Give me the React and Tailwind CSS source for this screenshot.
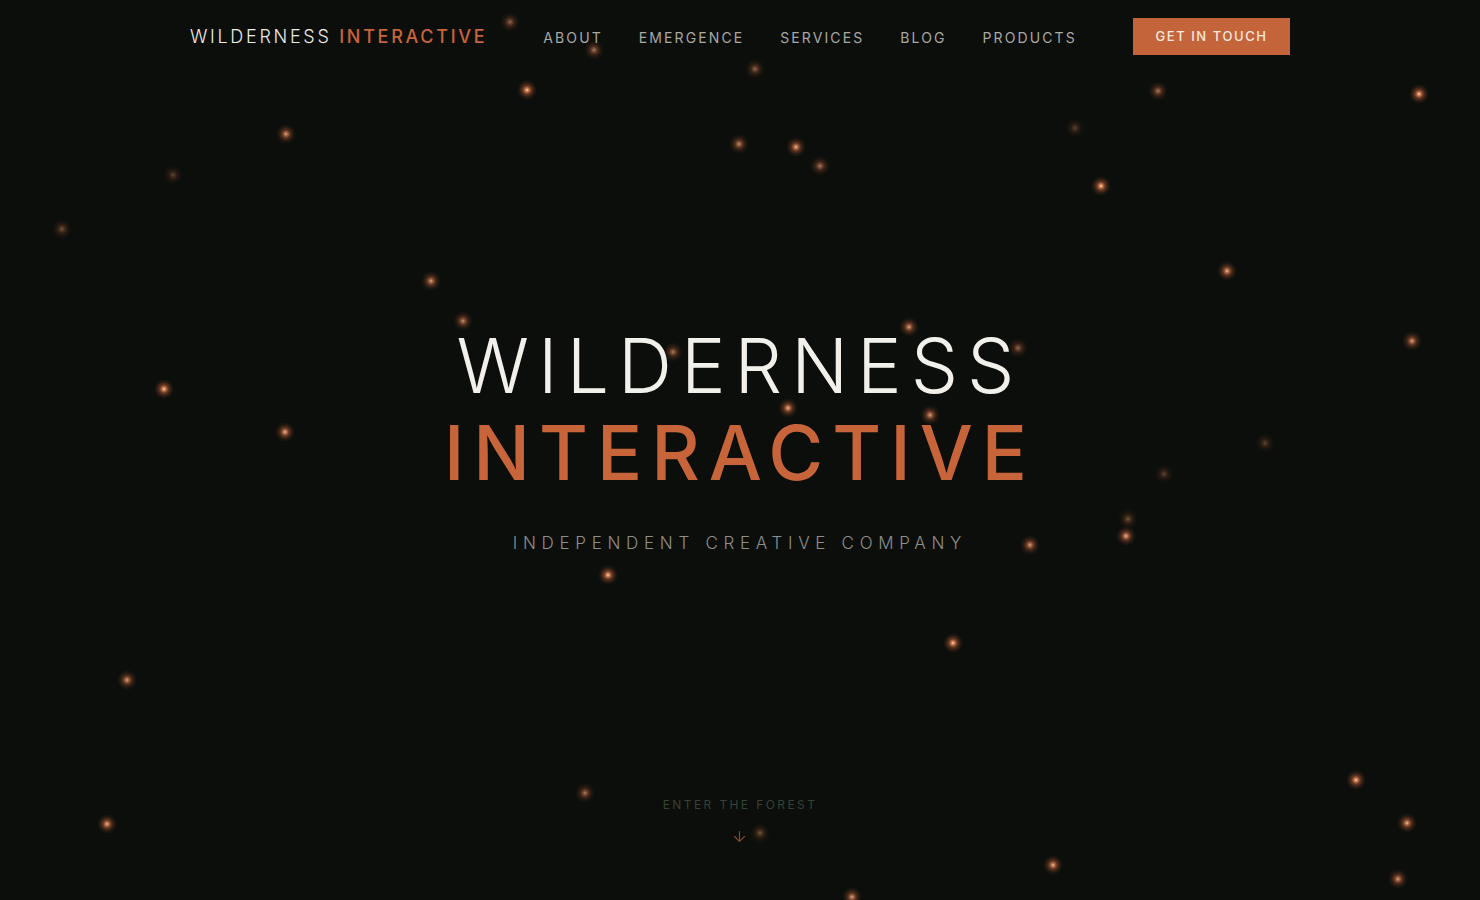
import { ArrowDown } from "lucide-react";

const NAV = ["About", "Emergence", "Services", "Blog", "Products"];

// x, y, brightness
const FIREFLIES = [
  [527, 90, 1], [286, 134, 0.8], [739, 144, 0.7], [796, 147, 0.9], [820, 166, 0.6],
  [1101, 186, 1], [1158, 91, 0.6], [1419, 94, 1], [755, 69, 0.5], [594, 50, 0.6],
  [510, 22, 0.5], [1227, 271, 0.9], [431, 281, 0.8], [463, 321, 0.7], [909, 327, 0.8],
  [1412, 341, 0.8], [1018, 348, 0.5], [164, 389, 1], [788, 408, 0.9], [930, 415, 0.8],
  [285, 432, 0.9], [1126, 536, 0.9], [1030, 545, 0.8], [1128, 519, 0.4], [608, 575, 1],
  [953, 643, 1], [127, 680, 0.8], [1356, 780, 1], [585, 793, 0.6], [107, 824, 0.9],
  [1407, 823, 0.9], [1053, 865, 0.9], [1398, 879, 0.8], [852, 897, 0.8], [62, 229, 0.4],
  [1075, 128, 0.3], [1164, 474, 0.3], [1265, 443, 0.3], [173, 175, 0.3], [673, 352, 0.6],
  [760, 833, 0.4],
];

function Firefly({ x, y, a }) {
  return (
    <span
      className="absolute rounded-full"
      style={{
        left: x - 10,
        top: y - 10,
        width: 20,
        height: 20,
        opacity: a,
        background:
          "radial-gradient(circle, rgba(255,220,190,1) 0%, rgba(230,140,95,0.9) 11%, rgba(200,100,58,0.45) 30%, rgba(150,75,45,0.18) 52%, rgba(150,75,45,0) 72%)",
      }}
    />
  );
}

export default function App() {
  return (
    <div className="relative h-[900px] w-full overflow-hidden bg-[#0b0e0b] font-['Inter',sans-serif]">
      {FIREFLIES.map(([x, y, a], i) => (
        <Firefly key={i} x={x} y={y} a={a} />
      ))}

      <div className="relative flex h-full flex-col">
        <header className="mx-auto flex w-[1100px] items-center pt-[19px]">
          <div className="text-[18px] tracking-[0.15em] leading-none">
            <span className="font-light text-[#ecebe6]">WILDERNESS </span>
            <span className="font-medium text-[#c8643a]">INTERACTIVE</span>
          </div>
          <nav className="ml-[56px] flex items-center gap-[36px]">
            {NAV.map((n) => (
              <a
                key={n}
                className="text-[14px] uppercase tracking-[0.15em] text-[#a9a8a2]"
              >
                {n}
              </a>
            ))}
          </nav>
          <button className="ml-auto -mt-[1px] h-[37px] w-[157px] bg-[#c4643b] text-[13px] font-medium tracking-[0.12em] text-[#f6e9df]">
            GET IN TOUCH
          </button>
        </header>

        <main className="flex flex-1 flex-col items-center pt-[273px]">
          <h1 className="flex flex-col items-center leading-none">
            <span className="text-[75px] font-light tracking-[0.12em] text-[#f2f0ea]">
              WILDERNESS
            </span>
            <span className="mt-[12px] text-[75px] font-medium tracking-[0.12em] text-[#c8643a]">
              INTERACTIVE
            </span>
          </h1>
          <p className="mt-[41px] text-[17px] font-light tracking-[0.335em] text-[#8e8e89]">
            INDEPENDENT CREATIVE COMPANY
          </p>

          <div className="mt-auto mb-[55px] flex flex-col items-center">
            <span className="text-[12px] tracking-[0.2em] text-[#354236]">
              ENTER THE FOREST
            </span>
            <ArrowDown className="mt-[14px] h-[17px] w-[17px] text-[#8c4a2a]" strokeWidth={1.5} />
          </div>
        </main>
      </div>
    </div>
  );
}
